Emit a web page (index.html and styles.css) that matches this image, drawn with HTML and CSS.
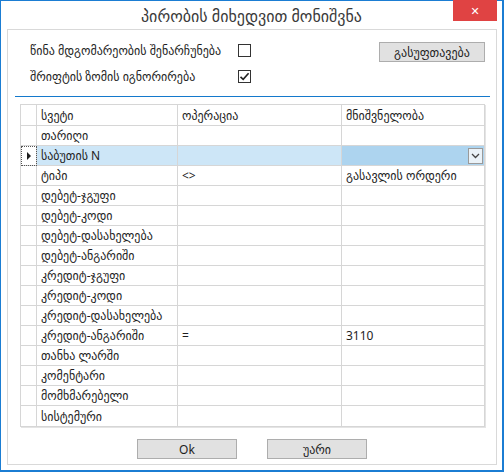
FILE: index.html
```html
<!DOCTYPE html>
<html>
<head>
<meta charset="utf-8">
<link rel="stylesheet" href="styles.css">
</head>
<body>
<div class="window">
  <div class="titlebar">
    <span class="title">პირობის მიხედვით მონიშვნა</span>
    <div class="close">&#x2715;</div>
  </div>
  <div class="panel">
    <div class="top">
      <div class="opts">
        <span class="opt-label">წინა მდგომარეობის შენარჩუნება</span>
        <span class="cb"></span>
        <span class="opt-label">შრიფტის ზომის იგნორირება</span>
        <span class="cb checked"><svg width="11" height="11" viewBox="0 0 11 11"><path d="M1.5 5.8 L4.2 8.4 L9.6 2.2" fill="none" stroke="#222" stroke-width="1.6"/></svg></span>
      </div>
      <button class="btn reset">გასუფთავება</button>
    </div>
    <div class="sep"></div>
    <div class="grid">
      <div class="c h0"></div><div class="c">სვეტი</div><div class="c">ოპერაცია</div><div class="c">მნიშვნელობა</div>

      <div class="c h0"></div><div class="c">თარიღი</div><div class="c"></div><div class="c"></div>
      <div class="c h0 cur"><span class="tri"></span></div><div class="c sel">საბუთის N</div><div class="c sel"></div><div class="c sel2"><span class="dd"><svg width="9" height="6" viewBox="0 0 9 6"><path d="M1 1 L4.5 4.5 L8 1" fill="none" stroke="#444" stroke-width="1.3"/></svg></span></div>
      <div class="c h0"></div><div class="c">ტიპი</div><div class="c">&lt;&gt;</div><div class="c">გასავლის ორდერი</div>
      <div class="c h0"></div><div class="c">დებეტ-ჯგუფი</div><div class="c"></div><div class="c"></div>
      <div class="c h0"></div><div class="c">დებეტ-კოდი</div><div class="c"></div><div class="c"></div>
      <div class="c h0"></div><div class="c">დებეტ-დასახელება</div><div class="c"></div><div class="c"></div>
      <div class="c h0"></div><div class="c">დებეტ-ანგარიში</div><div class="c"></div><div class="c"></div>
      <div class="c h0"></div><div class="c">კრედიტ-ჯგუფი</div><div class="c"></div><div class="c"></div>
      <div class="c h0"></div><div class="c">კრედიტ-კოდი</div><div class="c"></div><div class="c"></div>
      <div class="c h0"></div><div class="c">კრედიტ-დასახელება</div><div class="c"></div><div class="c"></div>
      <div class="c h0"></div><div class="c">კრედიტ-ანგარიში</div><div class="c">=</div><div class="c">3110</div>
      <div class="c h0"></div><div class="c">თანხა ლარში</div><div class="c"></div><div class="c"></div>
      <div class="c h0"></div><div class="c">კომენტარი</div><div class="c"></div><div class="c"></div>
      <div class="c h0"></div><div class="c">მომხმარებელი</div><div class="c"></div><div class="c"></div>
      <div class="c h0"></div><div class="c">სისტემური</div><div class="c"></div><div class="c"></div>
    </div>
    <div class="actions">
      <button class="btn act">Ok</button>
      <button class="btn act">უარი</button>
    </div>
  </div>
</div>
</body>
</html>
```

FILE: styles.css
```css
html, body {
  margin: 0;
  padding: 0;
  background: #ffffff;
}
body {
  font-family: "Noto Sans", "DejaVu Sans", sans-serif;
  font-size: 12px;
  color: #1e1e1e;
}
.window {
  position: relative;
  width: 504px;
  height: 472px;
  box-sizing: border-box;
  border-style: solid;
  border-color: #1b7dd3;
  border-width: 1px 2px 2px 1px;
  background: #ffffff;
}
.titlebar {
  height: 28px;
  display: flex;
  align-items: center;
  justify-content: center;
}
.title {
  font-size: 16px;
  color: #3a3a3a;
  margin-top: 1px;
}
.close {
  position: absolute;
  top: -1px;
  right: 5px;
  width: 44px;
  height: 21px;
  background: #e04343;
  color: #ffffff;
  font-size: 11px;
  font-weight: bold;
  display: flex;
  align-items: center;
  justify-content: center;
}
.panel {
  margin: 0 5px 5px 6px;
  height: 436px;
  box-sizing: border-box;
  border: 1px solid #d9d9d9;
  padding-top: 7px;
}
.top {
  display: flex;
  justify-content: space-between;
  align-items: flex-start;
  padding-left: 22px;
  padding-right: 11px;
}
.opts {
  display: grid;
  grid-template-columns: 208px 13px;
  grid-auto-rows: 26px;
  align-items: center;
}
.opt-label {
  white-space: nowrap;
}
.cb {
  width: 13px;
  height: 13px;
  box-sizing: border-box;
  border: 1px solid #333333;
  background: #ffffff;
  display: flex;
  align-items: center;
  justify-content: center;
}
.btn {
  font-family: "Noto Sans", "DejaVu Sans", sans-serif;
  font-size: 12px;
  color: #1e1e1e;
  background: #e1e1e1;
  border: 1px solid #adadad;
  padding: 0;
  height: 20px;
  box-sizing: border-box;
  display: flex;
  align-items: center;
  justify-content: center;
}
.reset {
  width: 106px;
  margin-top: 5px;
}
.sep {
  height: 1px;
  background: #1479cc;
  margin: 7px 6px 0 7px;
}
.grid {
  margin: 7px 0 0 12px;
  width: 465px;
  box-sizing: border-box;
  display: grid;
  grid-template-columns: 16px 141px 164px 142px;
  grid-template-rows: 21px repeat(15, 20px);
  border-style: solid;
  border-color: #d6d6d6;
  border-width: 1px 1px 1px 1px;
  box-shadow: 1px 1px 0 #e4e4e4;
}
.c {
  box-sizing: border-box;
  border-right: 1px solid #d6d6d6;
  border-bottom: 1px solid #d6d6d6;
  padding-left: 4px;
  display: flex;
  align-items: center;
  white-space: nowrap;
  overflow: hidden;
  position: relative;
}
.grid > .c:nth-child(4n) {
  border-right: none;
}
.grid > .c:nth-last-child(-n+4) {
  border-bottom: none;
}
.h0 {
  padding-left: 0;
}
.cur {
  outline: 1px dotted #555555;
  outline-offset: -1px;
  justify-content: center;
}
.tri {
  width: 0;
  height: 0;
  border-top: 4px solid transparent;
  border-bottom: 4px solid transparent;
  border-left: 4px solid #1e1e1e;
}
.sel {
  background: #cde6f7;
}
.sel2 {
  background: #add4ef;
  justify-content: flex-end;
  padding-right: 1px;
}
.dd {
  width: 15px;
  height: 16px;
  box-sizing: border-box;
  border: 1px solid #9a9a9a;
  background: #eaf2f8;
  display: flex;
  align-items: center;
  justify-content: center;
}
.actions {
  display: flex;
  justify-content: center;
  gap: 30px;
  margin-top: 12px;
}
.act {
  width: 100px;
}
```
